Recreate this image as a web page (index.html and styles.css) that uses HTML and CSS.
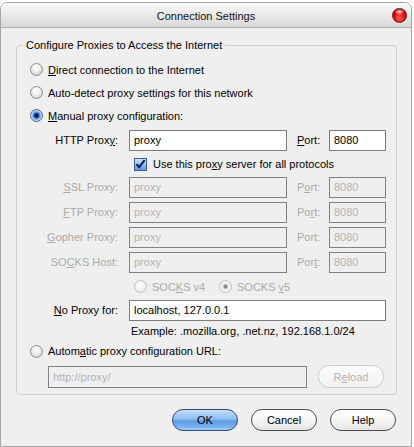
FILE: index.html
```html
<!DOCTYPE html>
<html>
<head>
<meta charset="utf-8">
<link rel="stylesheet" href="styles.css">
</head>
<body>
<div class="window">
  <div class="titlebar">
    <span></span>
    <span class="title">Connection Settings</span>
    <span class="close-wrap"><span class="close"></span></span>
  </div>
  <div class="content">
    <fieldset class="group">
      <legend>Configure Proxies to Access the Internet</legend>
      <div class="inner">
        <div class="opt"><span class="radio"></span><span><u>D</u>irect connection to the Internet</span></div>
        <div class="opt"><span class="radio"></span><span>Auto-detect proxy settings for this network</span></div>
        <div class="opt"><span class="radio checked"></span><span><u>M</u>anual proxy configuration:</span></div>

        <div class="grid">
          <span class="lbl">HTTP Prox<u>y</u>:</span>
          <span class="field">proxy</span>
          <span class="plbl"><u>P</u>ort:</span>
          <span class="field">8080</span>

          <div class="check-row"><span class="checkbox"><svg width="11" height="11" viewBox="0 0 11 11"><path d="M1.5 5.2 L4.2 8.2 L9.6 1.2" fill="none" stroke="#0d1f4d" stroke-width="2.1"/></svg></span><span>Use this pro<u>x</u>y server for all protocols</span></div>

          <span class="lbl dis"><u>S</u>SL Proxy:</span>
          <span class="field dis">proxy</span>
          <span class="plbl dis">P<u>o</u>rt:</span>
          <span class="field dis">8080</span>

          <span class="lbl dis"><u>F</u>TP Proxy:</span>
          <span class="field dis">proxy</span>
          <span class="plbl dis">Po<u>r</u>t:</span>
          <span class="field dis">8080</span>

          <span class="lbl dis"><u>G</u>opher Proxy:</span>
          <span class="field dis">proxy</span>
          <span class="plbl dis">Port:</span>
          <span class="field dis">8080</span>

          <span class="lbl dis">SO<u>C</u>KS Host:</span>
          <span class="field dis">proxy</span>
          <span class="plbl dis">Por<u>t</u>:</span>
          <span class="field dis">8080</span>

          <div class="socks-row">
            <span class="sopt"><span class="radio disabled"></span><span class="dis">SOC<u>K</u>S v4</span></span>
            <span class="sopt"><span class="radio disabled checked"></span><span class="dis">SOCKS <u>v</u>5</span></span>
          </div>

          <span class="lbl"><u>N</u>o Proxy for:</span>
          <span class="field wide">localhost, 127.0.0.1</span>

          <span class="example">Example: .mozilla.org, .net.nz, 192.168.1.0/24</span>
        </div>

        <div class="opt short"><span class="radio"></span><span>Autom<u>a</u>tic proxy configuration URL:</span></div>
        <div class="url-row">
          <span class="field dis url">http://proxy/</span>
          <span class="btn reload">R<u>e</u>load</span>
        </div>
      </div>
    </fieldset>
    <div class="buttons">
      <span class="btn default">OK</span>
      <span class="btn">Cancel</span>
      <span class="btn">Help</span>
    </div>
  </div>
</div>
</body>
</html>
```

FILE: styles.css
```css
* { box-sizing: border-box; }
html, body { margin: 0; padding: 0; }
body {
  background: #ffffff;
  font-family: "Liberation Sans", Arial, sans-serif;
  font-size: 11px;
  color: #000;
  padding-top: 2px;
}
u { text-decoration: underline; text-underline-offset: 1px; }

.window {
  width: 412px;
  height: 445px;
  border: 1px solid #a7a7a7;
  border-radius: 7px 7px 0 0;
  background: #efefef;
  overflow: hidden;
}

.titlebar {
  height: 25px;
  display: grid;
  grid-template-columns: 1fr auto 1fr;
  align-items: center;
  background: linear-gradient(#f8f8f8, #ebebeb 45%, #d8d8d8);
  border-bottom: 1px solid #b0b0b0;
}
.title { font-size: 11px; color: #111; padding-top: 1px; }
.close-wrap { display: flex; justify-content: flex-end; padding-right: 4px; }
.close {
  width: 15px; height: 15px; border-radius: 50%;
  border: 1px solid #7a1010;
  background:
    radial-gradient(ellipse 5px 3px at 50% 22%, rgba(255,255,255,0.95), rgba(255,255,255,0) 100%),
    radial-gradient(circle at 50% 70%, #ff7070 0, #f02020 4px, #c80000 7px);
  box-shadow: 0 0 0 1px #f4f4f4;
}

.content {
  padding: 10px 14px 0 15px;
}

.group {
  margin: 0;
  padding: 0 0 6px 0;
  border: 1px solid #d0d0d0;
  border-radius: 4px;
  min-inline-size: 0;
  width: 381px;
}
.group legend {
  margin-left: 6px;
  padding: 0 3px;
  line-height: 14px;
  font-size: 11px;
}
.inner { padding-top: 6px; }

.opt {
  height: 23px;
  display: flex;
  align-items: center;
  padding-left: 13px;
  gap: 5px;
}
.opt.short { height: 20px; }

.radio {
  width: 13px; height: 13px; border-radius: 50%;
  border: 1px solid #8c8c8c;
  background: radial-gradient(circle at 45% 35%, #ffffff 0, #f4f4f4 3px, #d6d6d6 7px);
  flex: none;
  display: inline-block;
}
.radio.checked {
  border-color: #52617e;
  background: radial-gradient(circle at 50% 50%, #0b1733 0, #0b1733 1.6px, #2e6fd6 2.6px, #7db4f3 4px, #d6e7fb 5.5px, #f2f7fd 6.5px);
}
.radio.disabled {
  border-color: #c2c2c2;
  background: radial-gradient(circle at 45% 35%, #ffffff 0, #f7f7f7 3px, #e6e6e6 7px);
}
.radio.disabled.checked {
  background: radial-gradient(circle at 50% 50%, #8a8a8a 0, #8a8a8a 1.4px, #dcdcdc 2.4px, #f6f6f6 4px, #ececec 6.5px);
}

.grid {
  margin-top: 3px;
  display: grid;
  grid-template-columns: 112px 158px 42px 57px;
  grid-template-rows: 21px 26px 25px 25px 25px 21px 27px 21px 20px;
  align-items: start;
}
.lbl {
  text-align: right;
  padding-right: 11px;
  line-height: 21px;
  white-space: nowrap;
}
.plbl {
  padding-left: 10px;
  line-height: 21px;
}
.dis { color: #aaaaaa; }

.field {
  height: 21px;
  line-height: 19px;
  border: 1px solid #7b7b7b;
  background: #ffffff;
  padding-left: 4px;
  white-space: nowrap;
  overflow: hidden;
}
.field.dis {
  background: #efefef;
  border-color: #828282;
  color: #b4b4b4;
}
.field.wide { grid-column: 2 / 5; }

.check-row {
  grid-column: 2 / 5;
  height: 26px;
  display: flex;
  align-items: center;
  padding-left: 5px;
  gap: 6px;
}
.checkbox {
  width: 13px; height: 13px;
  border: 1px solid #3d5d95;
  background: linear-gradient(#cfe3fa, #8fbdf1 50%, #5c9ae6);
  display: flex; align-items: center; justify-content: center;
  flex: none;
}
.checkbox svg { display: block; }

.socks-row {
  grid-column: 2 / 5;
  height: 27px;
  display: flex;
  align-items: center;
  padding-left: 5px;
}
.sopt { display: flex; align-items: center; gap: 5px; width: 85px; }

.example {
  grid-column: 2 / 5;
  line-height: 20px;
  padding-left: 2px;
}

.url-row {
  margin-top: 4px;
  display: flex;
  align-items: center;
  padding-left: 31px;
  gap: 11px;
}
.field.url { width: 259px; height: 22px; line-height: 20px; }

.btn {
  width: 66px;
  height: 22px;
  border-radius: 11px;
  border: 1px solid #4d4d4d;
  background: linear-gradient(#ffffff, #f6f6f6 50%, #e4e4e4);
  display: flex; align-items: center; justify-content: center;
  font-size: 11px;
}
.btn.reload {
  height: 23px;
  border-color: #cdcdcd;
  background: linear-gradient(#fbfbfb, #f3f3f3);
  color: #b2b2b2;
}
.btn.default {
  border-color: #2b4a86;
  background: linear-gradient(#c4ddf8, #8ebdf1 45%, #5d9be6 55%, #7ab3ef 85%, #a8d0f7);
}

.buttons {
  margin-top: 14px;
  display: flex;
  justify-content: flex-end;
  gap: 13px;
  padding-right: 1px;
}
```
